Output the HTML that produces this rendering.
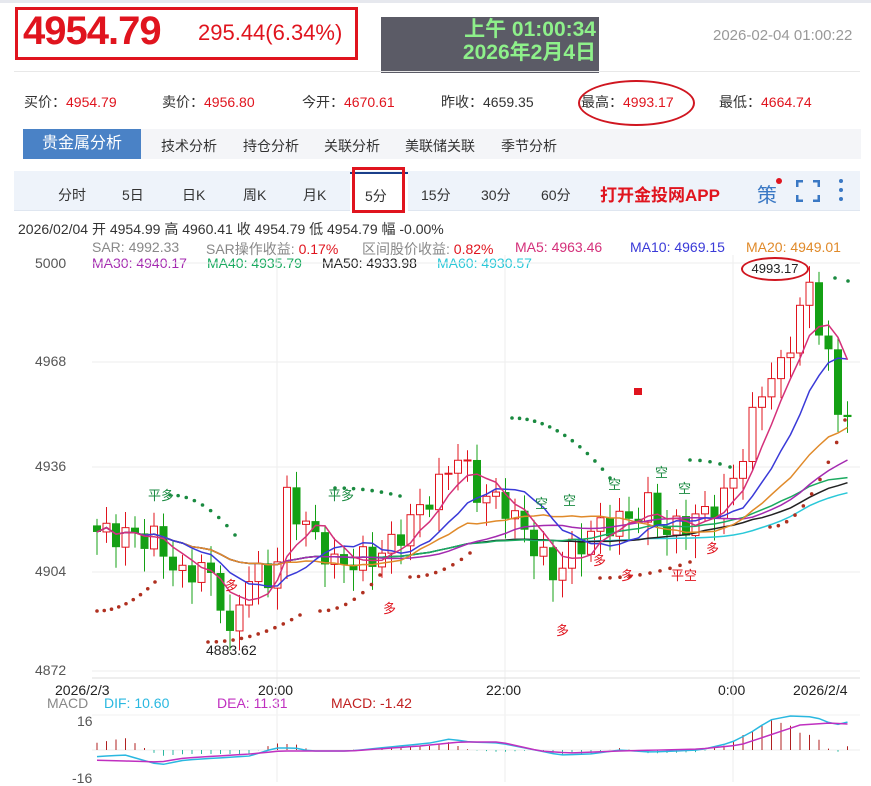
<!DOCTYPE html>
<html><head><meta charset="utf-8">
<style>
*{margin:0;padding:0;box-sizing:border-box}
body{width:871px;height:782px;overflow:hidden;background:#fff;font-family:"Liberation Sans","Noto Sans CJK SC",sans-serif;position:relative;color:#333}
.a{position:absolute;white-space:nowrap}
.r{color:#e0141e}
</style></head><body>
<div class="a" style="left:0;top:0;width:871px;height:3px;background:#e6e8ee"></div>
<div class="a" style="left:15px;top:7px;width:343px;height:53px;border:3px solid #e0141e"></div>
<div class="a r" style="left:23px;top:9px;font-size:40px;font-weight:bold;letter-spacing:-1px">4954.79</div>
<div class="a r" style="left:198px;top:20px;font-size:22px">295.44(6.34%)</div>
<div class="a" style="left:381px;top:17px;width:218px;height:56px;background:#5b5b66"></div>
<div class="a" style="left:380px;top:18px;width:218px;text-align:right;padding-right:2px;font-size:21px;font-weight:bold;color:#8ef08a;line-height:23px">上午 01:00:34<br>2026年2月4日</div>
<div class="a" style="left:713px;top:27px;font-size:15px;color:#999">2026-02-04 01:00:22</div>
<div class="a" style="left:14px;top:71px;width:846px;height:1px;background:#e8e8e8"></div>
<div class="a" style="left:24px;top:92px;font-size:14px">买价：<span class="r">4954.79</span></div>
<div class="a" style="left:162px;top:92px;font-size:14px">卖价：<span class="r">4956.80</span></div>
<div class="a" style="left:302px;top:92px;font-size:14px">今开：<span class="r">4670.61</span></div>
<div class="a" style="left:441px;top:92px;font-size:14px">昨收：4659.35</div>
<div class="a" style="left:581px;top:92px;font-size:14px">最高：<span class="r">4993.17</span></div>
<div class="a" style="left:719px;top:92px;font-size:14px">最低：<span class="r">4664.74</span></div>
<div class="a" style="left:578px;top:80px;width:117px;height:46px;border:2px solid #d01620;border-radius:50%"></div>
<div class="a" style="left:23px;top:129px;width:838px;height:30px;background:#f4f5f8"></div>
<div class="a" style="left:23px;top:129px;width:118px;height:30px;background:#4a82c6;color:#fff;font-size:16px;line-height:30px;text-align:center">贵金属分析</div>
<div class="a" style="left:161px;top:136px;font-size:14px">技术分析</div>
<div class="a" style="left:243px;top:136px;font-size:14px">持仓分析</div>
<div class="a" style="left:324px;top:136px;font-size:14px">关联分析</div>
<div class="a" style="left:405px;top:136px;font-size:14px">美联储关联</div>
<div class="a" style="left:501px;top:136px;font-size:14px">季节分析</div>
<div class="a" style="left:14px;top:171px;width:846px;height:40px;background:#eef3fa;border-bottom:1px solid #dfe6f0"></div>
<div class="a" style="left:350px;top:172px;width:58px;height:40px;background:#fff;border-top:2px solid #1a3f8a"></div>
<div class="a" style="left:352px;top:167px;width:53px;height:46px;border:3px solid #e0141e"></div>
<div class="a" style="left:58px;top:185px;font-size:14px">分时</div>
<div class="a" style="left:122px;top:185px;font-size:14px">5日</div>
<div class="a" style="left:182px;top:185px;font-size:14px">日K</div>
<div class="a" style="left:243px;top:185px;font-size:14px">周K</div>
<div class="a" style="left:303px;top:185px;font-size:14px">月K</div>
<div class="a" style="left:365px;top:186px;font-size:14px">5分</div>
<div class="a" style="left:421px;top:185px;font-size:14px">15分</div>
<div class="a" style="left:481px;top:185px;font-size:14px">30分</div>
<div class="a" style="left:541px;top:185px;font-size:14px">60分</div>
<div class="a r" style="left:600px;top:181px;font-size:17px;font-weight:bold">打开金投网APP</div>
<div class="a" style="left:757px;top:179px;font-size:20px;color:#3a78c4">策</div>
<div class="a" style="left:776px;top:178px;width:6px;height:6px;border-radius:50%;background:#e0141e"></div>
<svg class="a" style="left:796px;top:180px" width="24" height="22"><path d="M1 7V1H7M17 1H23V7M23 15V21H17M7 21H1V15" stroke="#3a78c4" stroke-width="3" fill="none"/></svg>
<svg class="a" style="left:837px;top:178px" width="8" height="24"><circle cx="4" cy="3" r="2" fill="#3a78c4"/><circle cx="4" cy="12" r="2" fill="#3a78c4"/><circle cx="4" cy="21" r="2" fill="#3a78c4"/></svg>
<div class="a" style="left:18px;top:219px;font-size:14px">2026/02/04 开 4954.99 高 4960.41 收 4954.79 低 4954.79 幅 -0.00%</div>
<div class="a" style="left:92px;top:239px;font-size:14px;color:#888">SAR: 4992.33</div>
<div class="a" style="left:206px;top:239px;font-size:14px;color:#888">SAR操作收益: <span class="r">0.17%</span></div>
<div class="a" style="left:362px;top:239px;font-size:14px;color:#888">区间股价收益: <span class="r">0.82%</span></div>
<div class="a" style="left:515px;top:239px;font-size:14px;color:#d4307a">MA5: 4963.46</div>
<div class="a" style="left:630px;top:239px;font-size:14px;color:#3a3ad8">MA10: 4969.15</div>
<div class="a" style="left:746px;top:239px;font-size:14px;color:#e08a2a">MA20: 4949.01</div>
<div class="a" style="left:35px;top:255px;font-size:14px;color:#555">5000</div>
<div class="a" style="left:92px;top:255px;font-size:14px;color:#a42ab0">MA30: 4940.17</div>
<div class="a" style="left:207px;top:255px;font-size:14px;color:#1aaa60">MA40: 4935.79</div>
<div class="a" style="left:322px;top:255px;font-size:14px;color:#222">MA50: 4933.98</div>
<div class="a" style="left:437px;top:255px;font-size:14px;color:#2ac8d8">MA60: 4930.57</div>
<div class="a" style="left:35px;top:353px;font-size:14px;color:#555">4968</div>
<div class="a" style="left:35px;top:458px;font-size:14px;color:#555">4936</div>
<div class="a" style="left:35px;top:563px;font-size:14px;color:#555">4904</div>
<div class="a" style="left:35px;top:662px;font-size:14px;color:#555">4872</div>
<div class="a" style="left:55px;top:682px;font-size:14px;color:#222">2026/2/3</div>
<div class="a" style="left:258px;top:682px;font-size:14px;color:#222">20:00</div>
<div class="a" style="left:486px;top:682px;font-size:14px;color:#222">22:00</div>
<div class="a" style="left:718px;top:682px;font-size:14px;color:#222">0:00</div>
<div class="a" style="left:793px;top:682px;font-size:14px;color:#222">2026/2/4</div>
<div class="a" style="left:47px;top:695px;font-size:14px;color:#888">MACD</div>
<div class="a" style="left:104px;top:695px;font-size:14px;color:#2ab8e0">DIF: 10.60</div>
<div class="a" style="left:217px;top:695px;font-size:14px;color:#c030c0">DEA: 11.31</div>
<div class="a" style="left:331px;top:695px;font-size:14px;color:#c02020">MACD: -1.42</div>
<div class="a" style="left:77px;top:713px;font-size:14px;color:#555">16</div>
<div class="a" style="left:72px;top:770px;font-size:14px;color:#555">-16</div>
<svg id="ch" class="a" style="left:0;top:0" width="871" height="782"></svg>
<div class="a" style="left:206px;top:642px;font-size:14px;color:#222">4883.62</div>
<div class="a" style="left:741px;top:257px;width:68px;height:24px;border:2px solid #d01620;border-radius:50%;font-size:13px;line-height:20px;text-align:center;color:#222">4993.17</div>
<script>
var s='',NS=document.getElementById('ch');
function Y(p){return 263+(5000-p)*3.28}
[263,362,467,572,671].forEach(function(y){s+='<line x1="92" x2="860" y1="'+y+'" y2="'+y+'" stroke="#eee"/>'});
[277,505,733].forEach(function(x){s+='<line x1="'+x+'" x2="'+x+'" y1="255" y2="782" stroke="#eee"/>'});
s+='<line x1="92" x2="860" y1="678" y2="678" stroke="#ddd"/><line x1="92" x2="860" y1="750" y2="750" stroke="#eee"/><line x1="92" x2="860" y1="715" y2="715" stroke="#f2f2f2"/>';
var kp=[[0,4918],[6,4916],[7,4912],[9,4904],[11,4908],[13,4898],[14,4885],[16,4906],[18,4903],[19,4910],[20,4928],[22,4920],[25,4908],[29,4910],[31,4914],[34,4925],[36,4932],[38,4942],[40,4930],[43,4926],[46,4914],[48,4905],[50,4912],[53,4920],[56,4922],[58,4926],[60,4918],[63,4922],[66,4928],[68,4942],[70,4962],[72,4968],[74,4985],[75,4993],[77,4970],[78,4955],[79,4955]];
var C=[];for(var i=0;i<80;i++){for(var k=0;k<kp.length-1;k++){if(i>=kp[k][0]&&i<=kp[k+1][0]){var t=(i-kp[k][0])/(kp[k+1][0]-kp[k][0]||1);C[i]=kp[k][1]+(kp[k+1][1]-kp[k][1])*t+4*Math.sin(i*2.3);break}}}
function X(i){return 97+i*9.5}
function ma(n,col){var p='';for(var i=0;i<80;i++){var a=0,c=0;for(var j=Math.max(0,i-n+1);j<=i;j++){a+=C[j];c++}p+=(i?'L':'M')+X(i).toFixed(1)+' '+Y(a/c).toFixed(1)}s+='<path d="'+p+'" fill="none" stroke="'+col+'" stroke-width="1.5"/>'}
for(var i=0;i<80;i++){var o=i?C[i-1]:C[0]+2,c=C[i],up=c>=o,hi=Math.max(o,c)+2+3*Math.abs(Math.sin(i*1.7)),lo=Math.min(o,c)-2-5*Math.abs(Math.cos(i*1.3)),x=X(i);var col=up?'#e0141e':'#14a014';
s+='<line x1="'+x+'" x2="'+x+'" y1="'+Y(hi)+'" y2="'+Y(lo)+'" stroke="'+col+'"/>';
var yt=Y(Math.max(o,c)),h=Math.max(1,Y(Math.min(o,c))-yt);
s+=up?'<rect x="'+(x-3.5)+'" y="'+yt+'" width="7" height="'+h+'" fill="#fff" stroke="'+col+'"/>':'<rect x="'+(x-4)+'" y="'+yt+'" width="8" height="'+h+'" fill="'+col+'"/>'}
ma(60,'#2ac8d8');ma(50,'#222');ma(40,'#1aaa60');ma(30,'#a42ab0');ma(20,'#e08a2a');ma(10,'#3a3ad8');ma(5,'#d4307a');
function dots(x1,y1,x2,y2,n,col){for(var k=0;k<n;k++){var t=k/(n-1);s+='<circle cx="'+(x1+(x2-x1)*t)+'" cy="'+(y1+(y2-y1)*t*t)+'" r="1.8" fill="'+col+'"/>'}}
dots(97,611,155,582,9,'#b03020');dots(208,642,300,615,12,'#b03020');dots(320,611,380,575,8,'#b03020');dots(410,577,470,553,8,'#b03020');dots(600,578,690,562,10,'#b03020');dots(770,527,845,420,10,'#b03020');
dots(170,495,235,535,9,'#1a8a40');dots(335,488,400,496,8,'#1a8a40');dots(512,418,610,478,14,'#1a8a40');dots(690,460,730,467,5,'#1a8a40');dots(835,278,848,281,2,'#1a8a40');
s+='<rect x="634" y="388" width="8" height="7" fill="#e0141e"/>';
// MACD
function pw(pts,i){var x=X(i);for(var k=0;k<pts.length-1;k++){if(x>=pts[k][0]&&x<=pts[k+1][0]){var t=(x-pts[k][0])/(pts[k+1][0]-pts[k][0]);return pts[k][1]+(pts[k+1][1]-pts[k][1])*t}}return pts[pts.length-1][1]}
var D=[[90,757],[125,755],[160,765],[185,760],[250,756],[275,748],[295,748],[310,751],[350,751],[400,746],[430,743],[450,739],[470,742],[500,743],[540,751],[560,755],[590,754],[620,750],[650,752],[700,750],[730,743],[750,733],[770,720],[790,716],[815,717],[835,725],[848,722]];
var E=[[90,760],[160,762],[185,758],[250,754],[280,751],[350,751],[420,746],[460,742],[500,742],[540,751],[570,753],[620,751],[700,749],[740,745],[770,735],[800,725],[830,723],[848,724]];
var dp='',ep='',m='';for(var i=0;i<80;i++){var a=pw(D,i),b=pw(E,i);dp+=(i?'L':'M')+X(i)+' '+a;ep+=(i?'L':'M')+X(i)+' '+b;var h=(b-a)*2;m+='<line x1="'+X(i)+'" x2="'+X(i)+'" y1="750" y2="'+(750-h)+'" stroke="'+(h>0?'#b02020':'#2ab8a0')+'"/>'}
s+=m+'<path d="'+dp+'" fill="none" stroke="#2ab8e0" stroke-width="1.5"/><path d="'+ep+'" fill="none" stroke="#c030c0" stroke-width="1.5"/>';
NS.innerHTML=s;
var L=[[148,485,'平多','#1a8a40'],[328,485,'平多','#1a8a40'],[535,493,'空','#1a8a40'],[563,490,'空','#1a8a40'],[655,462,'空','#1a8a40'],[678,478,'空','#1a8a40'],[608,474,'空','#1a8a40'],[225,575,'多','#e0141e'],[383,598,'多','#e0141e'],[556,620,'多','#e0141e'],[593,550,'多','#e0141e'],[621,565,'多','#e0141e'],[706,538,'多','#e0141e'],[671,565,'平空','#e0141e']];
L.forEach(function(l){var d=document.createElement('div');d.className='a';d.style.cssText='left:'+l[0]+'px;top:'+l[1]+'px;font-size:13px;color:'+l[3];d.textContent=l[2];document.body.appendChild(d)});
</script>
</body></html>
